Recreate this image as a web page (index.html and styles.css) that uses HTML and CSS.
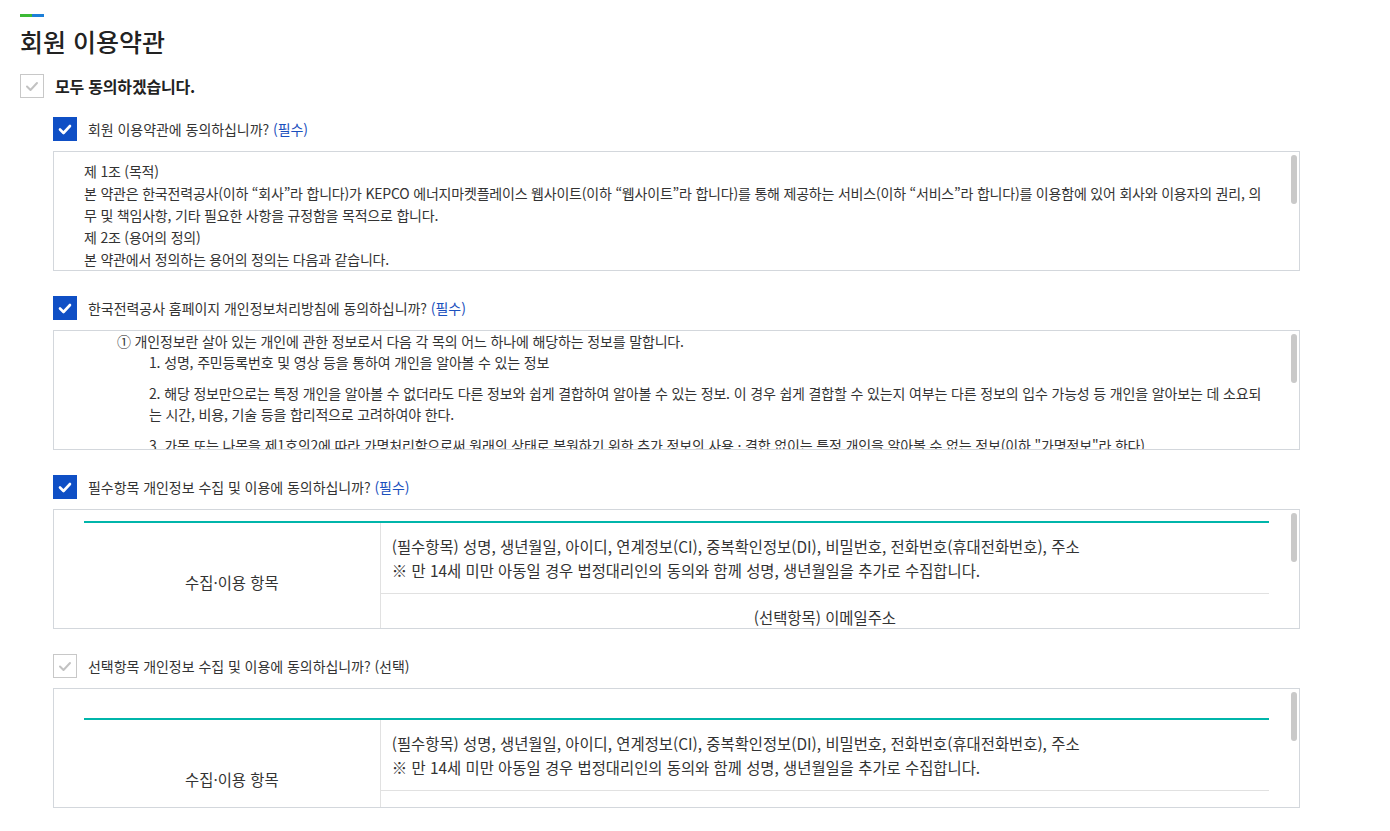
FILE: index.html
```html
<!DOCTYPE html>
<html lang="ko">
<head>
    <meta charset="UTF-8">
    <meta name="viewport" content="width=device-width, initial-scale=1.0">
    <title>회원 이용약관</title>
    <link rel="stylesheet" href="styles.css">
</head>
<body>
    <div class="title-bar"><span class="green"></span><span class="blue"></span></div>
    <h1>회원 이용약관</h1>

    <div class="all-agree">
        <span class="chk">
            <svg width="24" height="24" viewBox="0 0 24 24"><polyline points="7,12.5 10.5,16 17,9" fill="none" stroke="#c2c2c2" stroke-width="2" stroke-linecap="round" stroke-linejoin="round"/></svg>
        </span>
        <span>모두 동의하겠습니다.</span>
    </div>

    <div class="sections">
        <!-- 회원 이용약관 -->
        <div class="section">
            <div class="agree-row">
                <span class="chk on">
                    <svg width="24" height="24" viewBox="0 0 24 24"><polyline points="7,12.5 10.5,16 17,9" fill="none" stroke="#fff" stroke-width="2.6" stroke-linecap="round" stroke-linejoin="round"/></svg>
                </span>
                <span>회원 이용약관에 동의하십니까? <em>(필수)</em></span>
            </div>
            <div class="scroll-wrap">
                <div class="scroll-box terms">
                    <p>제 1조 (목적)</p>
                    <p>본 약관은 한국전력공사(이하 “회사”라 합니다)가 KEPCO 에너지마켓플레이스 웹사이트(이하 “웹사이트”라 합니다)를 통해 제공하는 서비스(이하 “서비스”라 합니다)를 이용함에 있어 회사와 이용자의 권리, 의무 및 책임사항, 기타 필요한 사항을 규정함을 목적으로 합니다.</p>
                    <p>제 2조 (용어의 정의)</p>
                    <p>본 약관에서 정의하는 용어의 정의는 다음과 같습니다.</p>
                    <p>1. “이용자”란 웹사이트에 접속하여 이 약관에 따라 회사가 제공하는 서비스를 받는 회원 및 비회원을 말합니다.</p>
                    <p>2. “회원”이란 회사에 개인정보를 제공하여 회원등록을 한 자로서, 회사가 제공하는 서비스를 계속적으로 이용할 수 있는 자를 말합니다.</p>
                    <p>3. “아이디(ID)”란 회원의 식별과 서비스 이용을 위하여 회원이 정하고 회사가 승인하는 문자와 숫자의 조합을 말합니다.</p>
                    <p>4. “비밀번호”란 회원임을 확인하고 비밀보호를 위해 회원 자신이 정한 문자 또는 숫자의 조합을 말합니다.</p>
                    <p>제 3조 (약관의 효력 및 변경)</p>
                    <p>① 이 약관은 서비스를 이용하고자 하는 모든 이용자에 대하여 그 효력을 발생합니다.</p>
                    <p>② 회사는 필요하다고 인정되는 경우 관련 법령을 위배하지 않는 범위에서 이 약관을 변경할 수 있습니다.</p>
                    <p>③ 변경된 약관은 웹사이트에 공지함으로써 효력을 발생합니다.</p>
                </div>
                <span class="thumb"></span>
            </div>
        </div>

        <!-- 개인정보처리방침 -->
        <div class="section">
            <div class="agree-row">
                <span class="chk on">
                    <svg width="24" height="24" viewBox="0 0 24 24"><polyline points="7,12.5 10.5,16 17,9" fill="none" stroke="#fff" stroke-width="2.6" stroke-linecap="round" stroke-linejoin="round"/></svg>
                </span>
                <span>한국전력공사 홈페이지 개인정보처리방침에 동의하십니까? <em>(필수)</em></span>
            </div>
            <div class="scroll-wrap">
                <div class="scroll-box policy">
                    <p class="lead">① 개인정보란 살아 있는 개인에 관한 정보로서 다음 각 목의 어느 하나에 해당하는 정보를 말합니다.</p>
                    <div class="items">
                        <p>1. 성명, 주민등록번호 및 영상 등을 통하여 개인을 알아볼 수 있는 정보</p>
                        <p>2. 해당 정보만으로는 특정 개인을 알아볼 수 없더라도 다른 정보와 쉽게 결합하여 알아볼 수 있는 정보. 이 경우 쉽게 결합할 수 있는지 여부는 다른 정보의 입수 가능성 등 개인을 알아보는 데 소요되는 시간, 비용, 기술 등을 합리적으로 고려하여야 한다.</p>
                        <p>3. 가목 또는 나목을 제1호의2에 따라 가명처리함으로써 원래의 상태로 복원하기 위한 추가 정보의 사용 · 결합 없이는 특정 개인을 알아볼 수 없는 정보(이하 "가명정보"라 한다)</p>
                    </div>
                    <p class="lead">② 정보주체란 처리되는 정보에 의하여 알아볼 수 있는 사람으로서 그 정보의 주체가 되는 사람을 말합니다.</p>
                    <p class="lead">③ 처리란 개인정보의 수집, 생성, 연계, 연동, 기록, 저장, 보유, 가공, 편집, 검색, 출력, 정정, 복구, 이용, 제공, 공개, 파기, 그 밖에 이와 유사한 행위를 말합니다.</p>
                    <p class="lead">④ 개인정보처리자란 업무를 목적으로 개인정보파일을 운용하기 위하여 스스로 또는 다른 사람을 통하여 개인정보를 처리하는 공공기관, 법인, 단체 및 개인 등을 말합니다.</p>
                </div>
                <span class="thumb"></span>
            </div>
        </div>

        <!-- 필수항목 수집 및 이용 -->
        <div class="section">
            <div class="agree-row">
                <span class="chk on">
                    <svg width="24" height="24" viewBox="0 0 24 24"><polyline points="7,12.5 10.5,16 17,9" fill="none" stroke="#fff" stroke-width="2.6" stroke-linecap="round" stroke-linejoin="round"/></svg>
                </span>
                <span>필수항목 개인정보 수집 및 이용에 동의하십니까? <em>(필수)</em></span>
            </div>
            <div class="scroll-wrap">
                <div class="scroll-box table-box">
                    <table class="info-table">
                        <tr>
                            <th rowspan="2">수집·이용 항목</th>
                            <td>(필수항목) 성명, 생년월일, 아이디, 연계정보(CI), 중복확인정보(DI), 비밀번호, 전화번호(휴대전화번호), 주소<br>※ 만 14세 미만 아동일 경우 법정대리인의 동의와 함께 성명, 생년월일을 추가로 수집합니다.</td>
                        </tr>
                        <tr>
                            <td class="center">(선택항목) 이메일주소</td>
                        </tr>
                        <tr>
                            <th>수집·이용 목적</th>
                            <td>회원 가입 및 본인 확인, 회원제 서비스 제공, 민원 처리 및 공지사항 전달</td>
                        </tr>
                        <tr>
                            <th>보유·이용 기간</th>
                            <td>회원 탈퇴 시까지 (단, 관계 법령에 따라 보존할 필요가 있는 경우 해당 기간까지)</td>
                        </tr>
                    </table>
                    <p class="note">※ 위의 개인정보 수집·이용에 대한 동의를 거부할 권리가 있습니다. 다만, 동의를 거부할 경우 회원가입이 제한됩니다.</p>
                </div>
                <span class="thumb"></span>
            </div>
        </div>

        <!-- 선택항목 수집 및 이용 -->
        <div class="section">
            <div class="agree-row">
                <span class="chk">
                    <svg width="24" height="24" viewBox="0 0 24 24"><polyline points="7,12.5 10.5,16 17,9" fill="none" stroke="#c2c2c2" stroke-width="2" stroke-linecap="round" stroke-linejoin="round"/></svg>
                </span>
                <span>선택항목 개인정보 수집 및 이용에 동의하십니까? (선택)</span>
            </div>
            <div class="scroll-wrap">
                <div class="scroll-box table-box wide-top">
                    <table class="info-table">
                        <tr>
                            <th rowspan="2">수집·이용 항목</th>
                            <td>(필수항목) 성명, 생년월일, 아이디, 연계정보(CI), 중복확인정보(DI), 비밀번호, 전화번호(휴대전화번호), 주소<br>※ 만 14세 미만 아동일 경우 법정대리인의 동의와 함께 성명, 생년월일을 추가로 수집합니다.</td>
                        </tr>
                        <tr>
                            <td class="center">(선택항목) 이메일주소</td>
                        </tr>
                        <tr>
                            <th>수집·이용 목적</th>
                            <td>서비스 관련 안내 및 이벤트 정보 제공</td>
                        </tr>
                        <tr>
                            <th>보유·이용 기간</th>
                            <td>회원 탈퇴 또는 동의 철회 시까지</td>
                        </tr>
                    </table>
                    <p class="note">※ 선택항목에 대한 동의를 거부하더라도 회원가입 및 서비스 이용에는 제한이 없습니다.</p>
                </div>
                <span class="thumb"></span>
            </div>
        </div>
    </div>
</body>
</html>
```

FILE: styles.css
```css
body {
    margin: 0;
    padding: 14px 20px 0;
    font-family: "Noto Sans CJK KR", "Noto Sans", sans-serif;
    color: #333;
    background-color: #fff;
}

.title-bar {
    display: flex;
    height: 3px;
}

.title-bar .green {
    width: 12px;
    background-color: #3cb935;
}

.title-bar .blue {
    width: 12px;
    background-color: #1c7fd8;
}

h1 {
    margin: 9px 0 0;
    font-size: 25px;
    font-weight: 500;
    line-height: 30px;
    color: #222;
}

.chk {
    display: flex;
    width: 24px;
    height: 24px;
    box-sizing: border-box;
    border: 1px solid #c8c8c8;
    background-color: #fff;
    flex-shrink: 0;
}

.chk svg {
    margin: -1px;
}

.chk.on {
    border-color: #0f4fc5;
    background-color: #0f4fc5;
}

.all-agree {
    display: flex;
    align-items: center;
    gap: 11px;
    margin-top: 18px;
    font-size: 16px;
    font-weight: 700;
    letter-spacing: -0.2px;
    color: #222;
}

.sections {
    width: 1247px;
    margin: 19px 0 0 33px;
}

.section + .section {
    margin-top: 25px;
}

.agree-row {
    display: flex;
    align-items: center;
    gap: 11px;
    margin-bottom: 10px;
    font-size: 14px;
    line-height: 24px;
    letter-spacing: -0.05px;
}

.agree-row em {
    font-style: normal;
    color: #1b50bd;
}

/* 스크롤 박스 + 스크롤바 표시 */
.scroll-wrap {
    position: relative;
}

.thumb {
    position: absolute;
    top: 4px;
    right: 3px;
    width: 6px;
    height: 49px;
    border-radius: 3px;
    background-color: #c9c9c9;
}

.scroll-box {
    height: 120px;
    box-sizing: border-box;
    border: 1px solid #d3d7dc;
    overflow-y: auto;
    font-size: 14px;
}

.scroll-box p {
    margin: 0;
}

.terms {
    padding: 8px 30px 0;
    line-height: 22px;
    letter-spacing: -0.2px;
}

.policy {
    padding: 0 30px 0 63px;
    line-height: 21px;
    letter-spacing: -0.15px;
}

.policy .items {
    padding-left: 32px;
}

.policy .items p {
    margin-top: 10px;
}

.policy .items p:first-child {
    margin-top: 0;
}

.policy .lead + .lead,
.policy .items + .lead {
    margin-top: 10px;
}

.table-box {
    padding: 11px 30px 0;
}

.table-box.wide-top {
    padding-top: 29px;
}

.info-table {
    width: 100%;
    border-collapse: collapse;
    border-top: 2px solid #00b5aa;
    font-size: 15.4px;
    line-height: 24px;
}

.info-table th {
    width: 25%;
    font-weight: normal;
    text-align: center;
    border-right: 1px solid #e1e1e1;
    border-bottom: 1px solid #e1e1e1;
}

.info-table td {
    padding: 11px 11px;
    border-bottom: 1px solid #e1e1e1;
}

.info-table td.center {
    text-align: center;
}

.table-box .note {
    padding: 12px 0;
    line-height: 22px;
}
```
